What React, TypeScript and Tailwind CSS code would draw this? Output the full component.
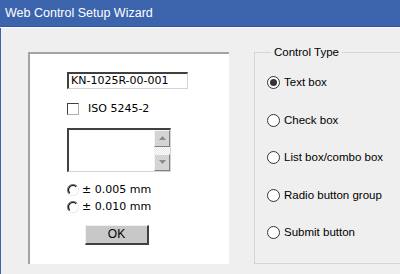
import React from "react";

const sans = { fontFamily: '"Liberation Sans", Arial, sans-serif' };
const verd = { fontFamily: '"DejaVu Sans", Verdana, sans-serif' };

// old-style sunken radio (left panel)
function OldRadio() {
  return (
    <svg width="12" height="12" viewBox="0 0 12 12" className="shrink-0">
      <circle cx="6" cy="6" r="5.5" fill="#fff" />
      <path d="M10 2 A5.5 5.5 0 0 0 2 10" fill="none" stroke="#808080" strokeWidth="1" />
      <path d="M9.2 2.8 A4.5 4.5 0 0 0 2.8 9.2" fill="none" stroke="#1a1a1a" strokeWidth="1.3" />
      <path d="M10 2 A5.5 5.5 0 0 1 2 10" fill="none" stroke="#e8e8e8" strokeWidth="1" />
    </svg>
  );
}

function NewRadio({ checked }: { checked?: boolean }) {
  return (
    <span className="w-[13px] h-[13px] rounded-full border border-[#333] bg-white flex items-center justify-center shrink-0">
      {checked && <span className="w-[7px] h-[7px] rounded-full bg-[#333]" />}
    </span>
  );
}

function ScrollBtn({ up }: { up?: boolean }) {
  return (
    <div className="w-[16px] h-[17px] bg-[#d4d4d4] border-t border-l border-t-[#f4f4f4] border-l-[#f4f4f4] border-b border-r border-b-[#808080] border-r-[#808080] flex items-center justify-center">
      <svg width="7" height="4" viewBox="0 0 7 4">
        {up ? <path d="M0 4 L3.5 0 L7 4 Z" fill="#8a8a8a" /> : <path d="M0 0 L3.5 4 L7 0 Z" fill="#8a8a8a" />}
      </svg>
    </div>
  );
}

export default function App() {
  const types = ["Text box", "Check box", "List box/combo box", "Radio button group", "Submit button"];
  return (
    <div className="w-[400px] h-[274px] bg-[#efefef] flex flex-col overflow-hidden">
      {/* title bar */}
      <div className="h-[26px] bg-[#3b64ad] flex items-center pl-[5px] text-white text-[12.5px]" style={sans}>
        Web Control Setup Wizard
      </div>
      <div className="h-[1px] bg-[#2f59a8]" />
      <div className="h-[1px] bg-[#fafafa]" />

      <div className="flex-1 flex items-start border-l border-[#3b64ad] pl-[27px]">
        {/* left white panel */}
        <div className="mt-[24px] w-[201px] h-[212px] bg-white border-t-2 border-l-2 border-t-[#a3a3a3] border-l-[#a3a3a3] pl-[37px] pt-[18px] flex flex-col" style={verd}>
          <div className="w-[121px] h-[17px] border-t-2 border-l-2 border-t-[#404040] border-l-[#404040] border-b border-r border-b-[#d4d4d4] border-r-[#d4d4d4] flex items-center pl-[2px] text-[11px] text-black">
            KN-1025R-00-001
          </div>
          <div className="mt-[12px] flex items-center gap-[9px] text-[11px]">
            <span className="w-[12px] h-[12px] border border-t-[#404040] border-l-[#404040] border-b-[#b0b0b0] border-r-[#b0b0b0] bg-white shrink-0" />
            <span>ISO 5245-2</span>
          </div>
          <div className="mt-[10px] w-[104px] h-[44px] border-t-2 border-l-2 border-t-[#404040] border-l-[#404040] border-b border-r border-b-[#d4d4d4] border-r-[#d4d4d4] flex justify-end">
            <div className="w-[16px] flex flex-col justify-between bg-[repeating-conic-gradient(#e6e6e6_0%_25%,#ffffff_0%_50%)] bg-[length:2px_2px]">
              <ScrollBtn up />
              <ScrollBtn />
            </div>
          </div>
          <div className="mt-[12px] flex flex-col gap-[4px] text-[11px] text-black">
            <div className="flex items-center gap-[3px] h-[13px]">
              <OldRadio />
              <span>± 0.005 mm</span>
            </div>
            <div className="flex items-center gap-[3px] h-[13px]">
              <OldRadio />
              <span>± 0.010 mm</span>
            </div>
          </div>
          <button
            className="mt-[11px] ml-[18px] w-[64px] h-[20px] bg-[#c8c8c8] border-t border-l border-t-[#f0f0f0] border-l-[#f0f0f0] border-b-2 border-r-2 border-b-[#404040] border-r-[#404040] text-[12px] text-black flex items-center justify-center"
            style={sans}
          >
            OK
          </button>
        </div>

        {/* group box */}
        <fieldset className="ml-[25px] mt-[17px] flex-1 h-[219px] border border-[#d5d5d5] border-r-0 pl-[12px] pt-0 -mr-[2px]" style={sans}>
          <legend className="ml-[4px] px-[3px] text-[11.5px] text-black leading-[14px]">Control Type</legend>
          <div className="flex flex-col pt-[5px]">
            {types.map((t, i) => (
              <div key={t} className="h-[37.5px] flex items-center gap-[4px] text-[11.5px] text-black">
                <NewRadio checked={i === 0} />
                <span>{t}</span>
              </div>
            ))}
          </div>
        </fieldset>
      </div>
    </div>
  );
}
